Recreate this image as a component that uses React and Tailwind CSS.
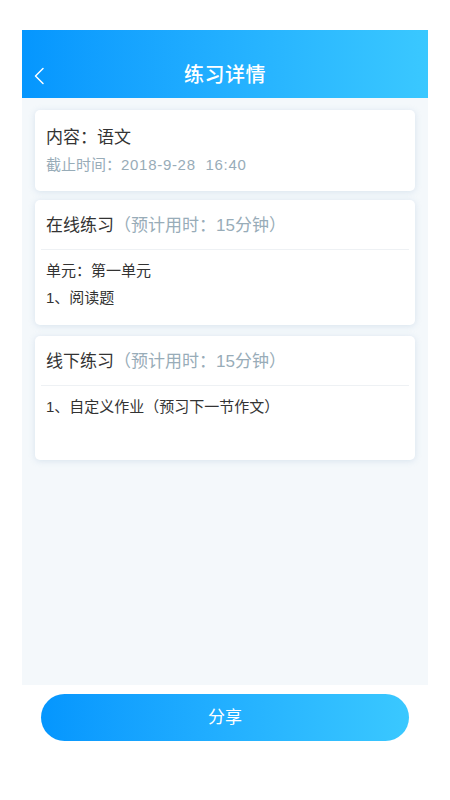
import React from 'react';

const font = { fontFamily: '"Liberation Sans", "Noto Sans CJK SC", sans-serif' };

const Card = ({ title, items, className }) => (
  <div className={`bg-white rounded-[5px] shadow-[0_1px_6px_rgba(150,180,210,0.3)] ${className}`}>
    <div className="h-[49px] flex items-center pl-[11px] pt-[2px]">
      <span className="text-[17px] text-[#333]">{title}</span>
      <span className="text-[17px] text-[#98acb8]">（预计用时：15分钟）</span>
    </div>
    <div className="mx-[6px] h-px bg-[#eef1f4]" />
    <div className="pl-[11px] pt-[8px] flex flex-col">
      {items.map((it) => (
        <div key={it} className="h-[27px] flex items-center text-[15px] text-[#333]">{it}</div>
      ))}
    </div>
  </div>
);

export default function App() {
  return (
    <div className="w-[450px] h-[800px] bg-white pt-[30px]" style={font}>
      <div className="mx-[22px] w-[406px]">
        {/* Header */}
        <div className="h-[68px] bg-gradient-to-r from-[#0596fe] to-[#3ac8ff] relative flex items-center justify-center pt-[22px]">
          <svg className="absolute left-[11px] top-[37px]" width="12" height="18" viewBox="0 0 12 18" fill="none">
            <path d="M10 1.5 L2.5 9 L10 16.5" stroke="white" strokeWidth="1.5" strokeLinecap="round" strokeLinejoin="round" />
          </svg>
          <span className="text-white text-[20px] font-medium tracking-[0.5px]">练习详情</span>
        </div>

        {/* Content */}
        <div className="h-[587px] bg-[#f4f8fb] px-[13px] pt-[12px]">
          <div className="bg-white rounded-[5px] shadow-[0_1px_6px_rgba(150,180,210,0.3)] h-[81px] pl-[11px] pt-[15px]">
            <div className="text-[17px] text-[#333] leading-[26px]">内容：语文</div>
            <div className="text-[15px] text-[#98acb8] leading-[26px] mt-[1px]">
              截止时间：<span className="tracking-[0.7px]">2018-9-28&nbsp;&nbsp;16:40</span>
            </div>
          </div>

          <Card title="在线练习" items={['单元：第一单元', '1、阅读题']} className="h-[125px] mt-[9px]" />
          <Card title="线下练习" items={['1、自定义作业（预习下一节作文）']} className="h-[124px] mt-[11px]" />
        </div>
      </div>

      {/* Share button */}
      <div className="px-[41px] pt-[9px]">
        <button className="w-[368px] h-[47px] rounded-full bg-gradient-to-r from-[#0596fe] to-[#3ac8ff] text-white text-[17px] flex items-center justify-center">
          分享
        </button>
      </div>
    </div>
  );
}
